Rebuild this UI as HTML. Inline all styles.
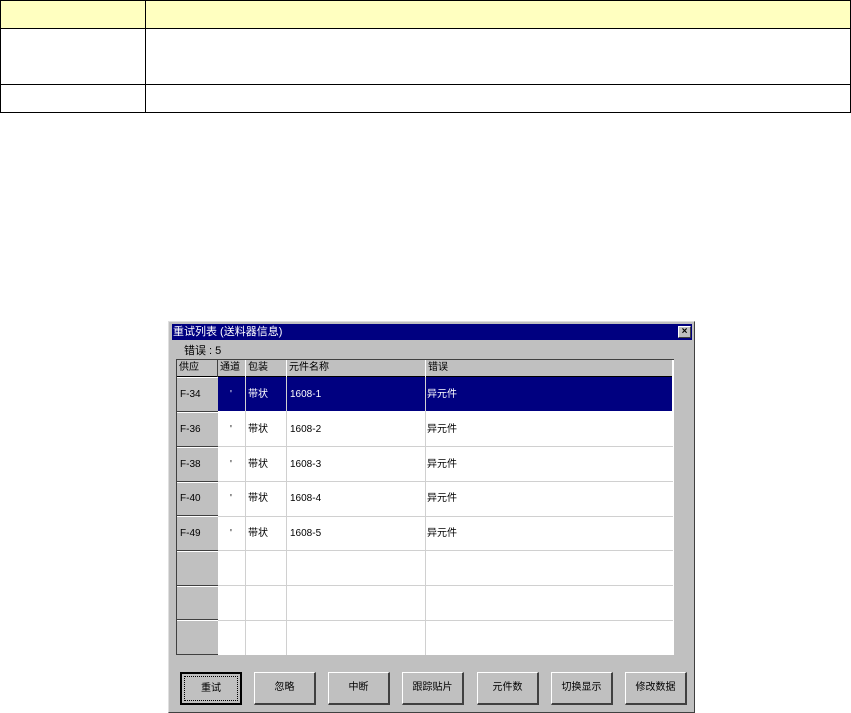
<!DOCTYPE html>
<html><head><meta charset="utf-8"><style>
*{margin:0;padding:0;box-sizing:border-box}
body{width:851px;height:713px;background:#fff;position:relative;overflow:hidden;font-family:"Liberation Sans","Noto Sans CJK SC",sans-serif}
.a{position:absolute}
.t{font-size:10px;color:#000;line-height:12px;white-space:nowrap}
.btn{position:absolute;top:672px;height:33px;width:62px;background:#c0c0c0;border-top:1px solid #fff;border-left:1px solid #fff;border-right:2px solid #404040;border-bottom:2px solid #404040;font-size:10px;text-align:center;line-height:30px}
.rh{position:absolute;left:177px;width:41px;background:#c0c0c0;border-top:1px solid #fff;border-bottom:1px solid #404040;font-size:10px;padding-left:3px}
.vl{position:absolute;width:1px;background:#d0d0d0}
.hl{position:absolute;left:218px;width:455px;height:1px;background:#d0d0d0}
</style></head><body>
<div class="a" style="left:0;top:0;width:851px;height:28px;background:#ffffc0"></div>
<div class="a" style="left:0;top:0;width:851px;height:113px;border:1px solid #000"></div>
<div class="a" style="left:0;top:28px;width:851px;height:1px;background:#000"></div>
<div class="a" style="left:0;top:84px;width:851px;height:1px;background:#000"></div>
<div class="a" style="left:145px;top:0;width:1px;height:113px;background:#000"></div>

<div class="a" style="left:168px;top:321px;width:527px;height:392px;background:#c0c0c0;border-top:1px solid #dfdfdf;border-left:1px solid #dfdfdf;border-right:1px solid #404040;border-bottom:1px solid #404040"></div>
<div class="a" style="left:172px;top:324px;width:520px;height:16px;background:#000080"></div>
<div class="a t" style="left:173px;top:326px;color:#fff;font-size:11px">重试列表 (送料器信息)</div>
<div class="a" style="left:678px;top:326px;width:13px;height:12px;background:#c0c0c0;border-top:1px solid #fff;border-left:1px solid #fff;border-right:1px solid #404040;border-bottom:1px solid #404040;font-size:10px;line-height:9px;text-align:center;font-weight:bold">×</div>
<div class="a t" style="left:184px;top:345px;font-size:11px">错误 : 5</div>

<div class="a" style="left:176px;top:359px;width:498px;height:296px;background:#fff;border-left:2px solid #404040;border-top:1px solid #404040"></div>
<div class="a" style="left:177px;top:360px;width:496px;height:17px;background:#c0c0c0;border-bottom:1px solid #000"></div>
<div class="a" style="left:672px;top:360px;width:2px;height:295px;background:#fff"></div>
<div class="a" style="left:218px;top:377px;width:454px;height:34px;background:#000080"></div>
<div class="vl" style="left:217px;top:360px;height:295px;background:#404040"></div>
<div class="vl" style="left:245px;top:360px;height:295px"></div>
<div class="vl" style="left:286px;top:360px;height:295px"></div>
<div class="vl" style="left:425px;top:360px;height:295px"></div>
<div class="a" style="left:245px;top:360px;width:1px;height:17px;background:#fff"></div>
<div class="a" style="left:286px;top:360px;width:1px;height:17px;background:#fff"></div>
<div class="a" style="left:425px;top:360px;width:1px;height:17px;background:#fff"></div>
<div class="a t" style="left:179px;top:362px">供应</div>
<div class="a t" style="left:220px;top:362px">通道</div>
<div class="a t" style="left:248px;top:362px">包装</div>
<div class="a t" style="left:289px;top:362px">元件名称</div>
<div class="a t" style="left:428px;top:362px">错误</div>

<div class="hl" style="top:446px"></div><div class="hl" style="top:481px"></div><div class="hl" style="top:516px"></div><div class="hl" style="top:550px"></div><div class="hl" style="top:585px"></div><div class="hl" style="top:620px"></div>

<div class="rh" style="top:377px;height:35px;line-height:33px">F-34</div>
<div class="rh" style="top:412px;height:35px;line-height:33px">F-36</div>
<div class="rh" style="top:447px;height:35px;line-height:33px">F-38</div>
<div class="rh" style="top:482px;height:34px;line-height:32px">F-40</div>
<div class="rh" style="top:516px;height:35px;line-height:33px">F-49</div>
<div class="rh" style="top:551px;height:35px"></div>
<div class="rh" style="top:586px;height:34px"></div>
<div class="rh" style="top:620px;height:35px"></div>

<div class="a t" style="left:230px;top:389px;color:#fff">'</div><div class="a t" style="left:248px;top:389px;color:#fff">带状</div><div class="a t" style="left:290px;top:389px;color:#fff">1608-1</div><div class="a t" style="left:427px;top:389px;color:#fff">异元件</div>
<div class="a t" style="left:230px;top:424px">'</div><div class="a t" style="left:248px;top:424px">带状</div><div class="a t" style="left:290px;top:424px">1608-2</div><div class="a t" style="left:427px;top:424px">异元件</div>
<div class="a t" style="left:230px;top:459px">'</div><div class="a t" style="left:248px;top:459px">带状</div><div class="a t" style="left:290px;top:459px">1608-3</div><div class="a t" style="left:427px;top:459px">异元件</div>
<div class="a t" style="left:230px;top:493px">'</div><div class="a t" style="left:248px;top:493px">带状</div><div class="a t" style="left:290px;top:493px">1608-4</div><div class="a t" style="left:427px;top:493px">异元件</div>
<div class="a t" style="left:230px;top:528px">'</div><div class="a t" style="left:248px;top:528px">带状</div><div class="a t" style="left:290px;top:528px">1608-5</div><div class="a t" style="left:427px;top:528px">异元件</div>

<div class="btn" style="left:180px;border:2px solid #000;outline:1px dotted #000;outline-offset:-5px">重试</div>
<div class="btn" style="left:254px">忽略</div>
<div class="btn" style="left:328px">中断</div>
<div class="btn" style="left:402px">跟踪贴片</div>
<div class="btn" style="left:477px">元件数</div>
<div class="btn" style="left:551px">切换显示</div>
<div class="btn" style="left:625px">修改数据</div>
</body></html>
